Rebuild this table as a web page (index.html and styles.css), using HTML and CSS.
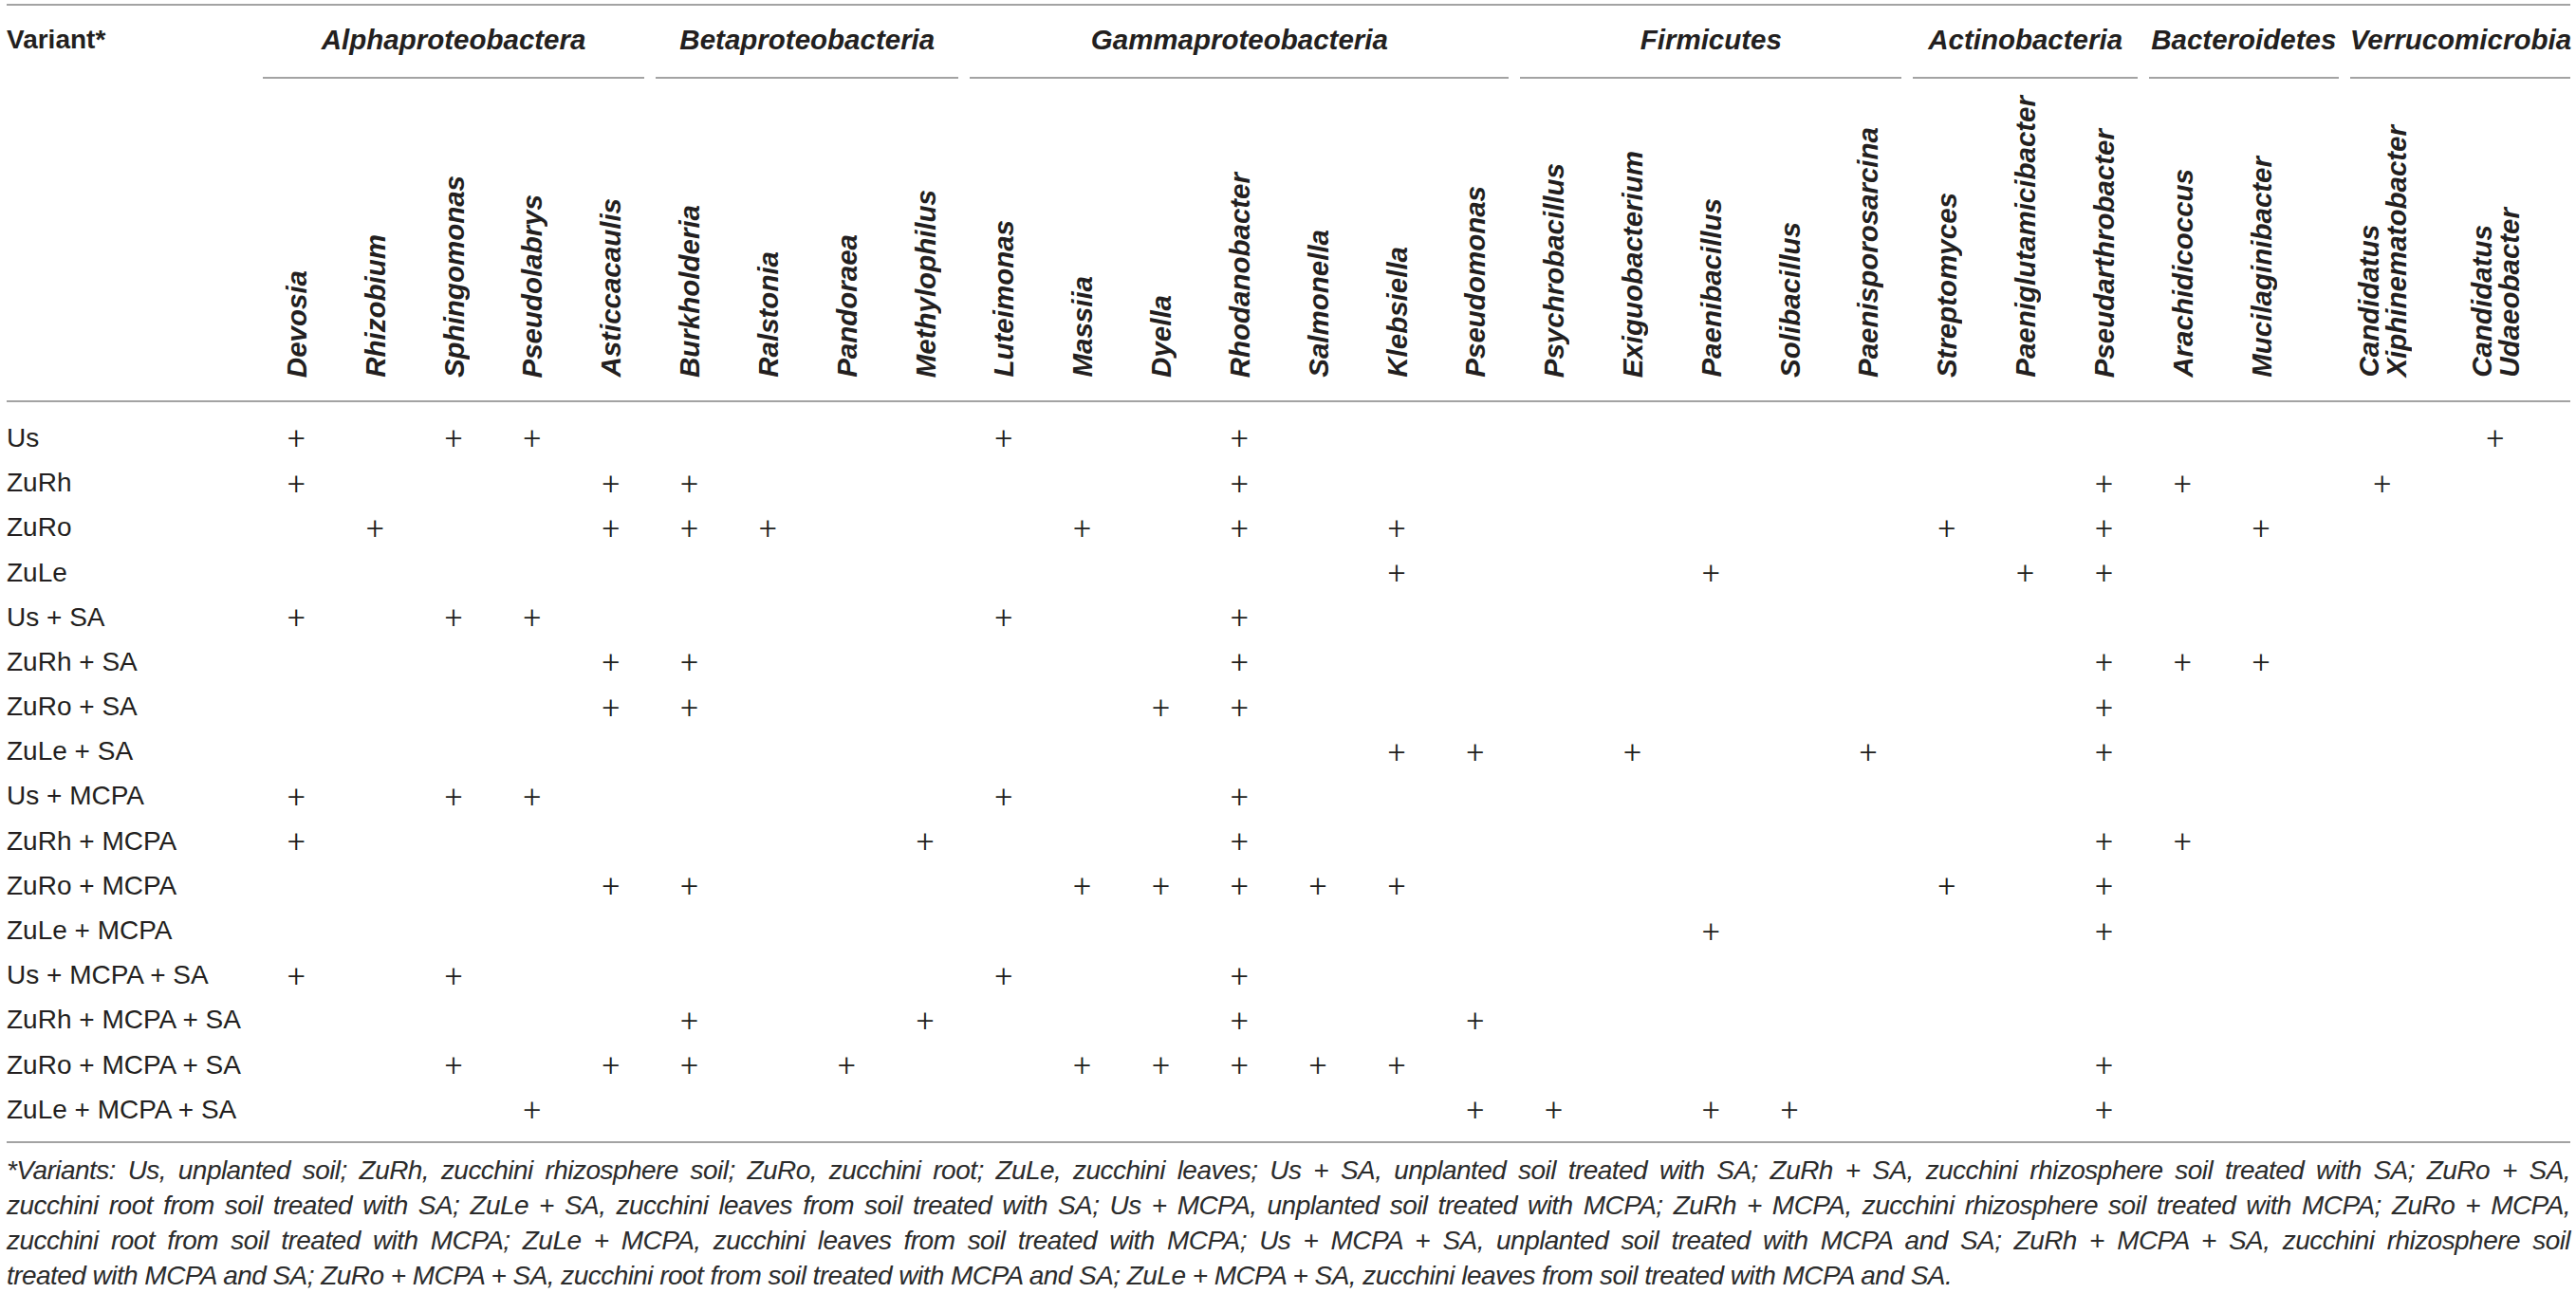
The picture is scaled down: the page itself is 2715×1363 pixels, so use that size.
FILE: index.html
```html
<!DOCTYPE html>
<html lang="en">
<head>
    <meta charset="UTF-8">
    <title>Bacterial genera by variant</title>
    <link rel="stylesheet" href="styles.css">
</head>
<body>
    <div class="table">
        <div class="thead" id="thead">
            <div class="variant-head">Variant*</div>
            <div class="group">Alphaproteobactera</div>
            <div class="group span-4">Betaproteobacteria</div>
            <div class="group span-7">Gammaproteobacteria</div>
            <div class="group span-5">Firmicutes</div>
            <div class="group span-3">Actinobacteria</div>
            <div class="group span-3">Bacteroidetes</div>
            <div class="group span-2 last">Verrucomicrobia</div>
        </div>
        <div class="tbody" id="tbody"></div>
    </div>
    <p class="footnote">
        <span class="line">*Variants: Us, unplanted soil; ZuRh, zucchini rhizosphere soil; ZuRo, zucchini root; ZuLe, zucchini leaves; Us + SA, unplanted soil treated with SA; ZuRh + SA, zucchini rhizosphere soil treated with SA; ZuRo + SA,</span>
        <span class="line">zucchini root from soil treated with SA; ZuLe + SA, zucchini leaves from soil treated with SA; Us + MCPA, unplanted soil treated with MCPA; ZuRh + MCPA, zucchini rhizosphere soil treated with MCPA; ZuRo + MCPA,</span>
        <span class="line">zucchini root from soil treated with MCPA; ZuLe + MCPA, zucchini leaves from soil treated with MCPA; Us + MCPA + SA, unplanted soil treated with MCPA and SA; ZuRh + MCPA + SA, zucchini rhizosphere soil</span>
        <span class="line">treated with MCPA and SA; ZuRo + MCPA + SA, zucchini root from soil treated with MCPA and SA; ZuLe + MCPA + SA, zucchini leaves from soil treated with MCPA and SA.</span>
    </p>

    <script>
        // null = empty gap column that belongs to the Bacteroidetes group
        const taxa = [
            'Devosia', 'Rhizobium', 'Sphingomonas', 'Pseudolabrys', 'Asticcacaulis',
            'Burkholderia', 'Ralstonia', 'Pandoraea', 'Methylophilus',
            'Luteimonas', 'Massiia', 'Dyella', 'Rhodanobacter', 'Salmonella', 'Klebsiella', 'Pseudomonas',
            'Psychrobacillus', 'Exiguobacterium', 'Paenibacillus', 'Solibacillus', 'Paenisporosarcina',
            'Streptomyces', 'Paeniglutamicibacter', 'Pseudarthrobacter',
            'Arachidicoccus', 'Mucilaginibacter', null,
            'Candidatus\nXiphinematobacter', 'Candidatus\nUdaeobacter'
        ];

        // indexes into taxa (without the gap column)
        const rows = [
            ['Us', [0, 2, 3, 9, 12, 27]],
            ['ZuRh', [0, 4, 5, 12, 23, 24, 26]],
            ['ZuRo', [1, 4, 5, 6, 10, 12, 14, 21, 23, 25]],
            ['ZuLe', [14, 18, 22, 23]],
            ['Us + SA', [0, 2, 3, 9, 12]],
            ['ZuRh + SA', [4, 5, 12, 23, 24, 25]],
            ['ZuRo + SA', [4, 5, 11, 12, 23]],
            ['ZuLe + SA', [14, 15, 17, 20, 23]],
            ['Us + MCPA', [0, 2, 3, 9, 12]],
            ['ZuRh + MCPA', [0, 8, 12, 23, 24]],
            ['ZuRo + MCPA', [4, 5, 10, 11, 12, 13, 14, 21, 23]],
            ['ZuLe + MCPA', [18, 23]],
            ['Us + MCPA + SA', [0, 2, 9, 12]],
            ['ZuRh + MCPA + SA', [5, 8, 12, 15]],
            ['ZuRo + MCPA + SA', [2, 4, 5, 7, 10, 11, 12, 13, 14, 23]],
            ['ZuLe + MCPA + SA', [3, 15, 16, 18, 19, 23]]
        ];

        const thead = document.getElementById('thead');
        const tbody = document.getElementById('tbody');

        for (const name of taxa) {
            const cell = document.createElement('div');
            cell.className = 'taxon-cell';
            if (name) {
                const label = document.createElement('span');
                label.className = 'taxon';
                label.textContent = name;
                cell.appendChild(label);
            }
            thead.appendChild(cell);
        }

        for (const [variant, hits] of rows) {
            const label = document.createElement('div');
            label.className = 'variant';
            label.textContent = variant;
            tbody.appendChild(label);

            let col = 0;
            for (const name of taxa) {
                const cell = document.createElement('div');
                cell.className = 'mark';
                if (name) {
                    if (hits.includes(col)) {
                        cell.textContent = '+';
                    }
                    col++;
                }
                tbody.appendChild(cell);
            }
        }
    </script>
</body>
</html>
```

FILE: styles.css
```css
:root {
    --cols: 264px repeat(26, 82.84px) 46.2px 80px 158px;
    --rule: #a3a3a3;
}
body {
    margin: 0;
    padding: 0 6px 0 7px;
    font-family: "Liberation Sans", Arial, sans-serif;
    font-size: 28px;
    color: #231f20;
    background: #fff;
}
.table {
    margin-top: 4px;
    border-top: 2px solid var(--rule);
}
.thead,
.tbody {
    display: grid;
    grid-template-columns: var(--cols);
}
.thead {
    border-bottom: 2px solid var(--rule);
}
.variant-head {
    grid-row: span 2;
    padding-top: 16px;
    line-height: 40px;
    font-weight: bold;
}
.group {
    grid-column: span 5;
    margin: 0 6px;
    padding: 16px 0 19px;
    line-height: 40px;
    border-bottom: 2px solid var(--rule);
    font-size: 29.5px;
    font-weight: bold;
    font-style: italic;
    text-align: center;
    white-space: nowrap;
}
.group.span-2 { grid-column: span 2; }
.group.span-3 { grid-column: span 3; }
.group.span-4 { grid-column: span 4; }
.group.span-7 { grid-column: span 7; }
.group.last {
    margin-right: 0;
}
.taxon-cell {
    height: 315px;
    padding-bottom: 24px;
    display: flex;
    justify-content: center;
    align-items: flex-end;
}
.taxon {
    writing-mode: vertical-rl;
    transform: rotate(180deg);
    white-space: pre;
    font-size: 29.5px;
    line-height: 29px;
    font-weight: bold;
    font-style: italic;
}
.tbody {
    padding: 14.4px 0 9.4px;
    border-bottom: 2px solid var(--rule);
    grid-auto-rows: 47.2px;
}
.variant {
    display: flex;
    align-items: center;
    white-space: nowrap;
}
.mark {
    display: flex;
    align-items: center;
    justify-content: center;
    font-family: Roboto, "Liberation Sans", sans-serif;
    font-weight: 300;
    font-size: 33px;
}
.footnote {
    margin: 0;
    padding-top: 10px;
    line-height: 37px;
    font-style: italic;
    letter-spacing: -0.55px;
    color: #2b2b2b;
}
.footnote .line {
    display: block;
    text-align: justify;
    text-align-last: justify;
}
.footnote .line:last-child {
    text-align-last: left;
}
```
